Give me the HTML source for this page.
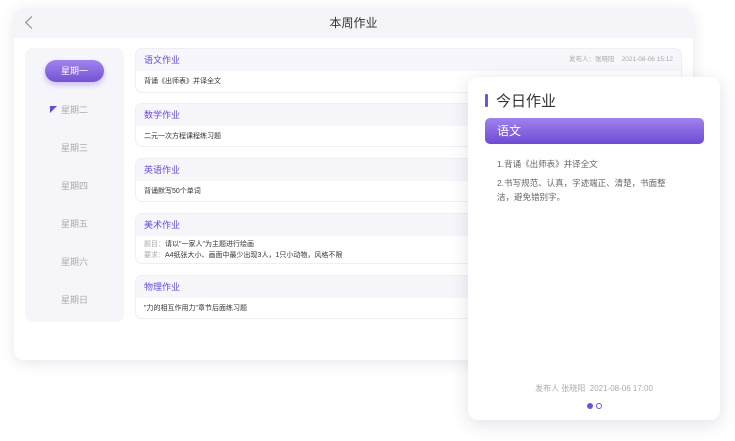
<!DOCTYPE html>
<html><head><meta charset="utf-8"><style>
*{margin:0;padding:0;box-sizing:border-box}
body{width:735px;height:441px;background:#fff;position:relative;overflow:hidden;font-family:"Liberation Sans","Noto Sans CJK SC",sans-serif}
.main{position:absolute;left:14px;top:8px;width:679px;height:352px;background:#fff;border-radius:10px;box-shadow:0 3px 14px rgba(60,60,110,.12);overflow:hidden}
.hd{height:30px;background:#f5f5f9;text-align:center;font-size:12px;line-height:30px;color:#333}
.back{position:absolute;left:13px;top:10px;width:9px;height:9px;border-left:1.3px solid #888;border-bottom:1.3px solid #888;transform:rotate(45deg)}
.side{position:absolute;left:11px;top:40px;width:99px;height:274px;background:#f6f6fa;border-radius:8px}
.day{position:absolute;left:0;width:99px;text-align:center;font-size:9px;color:#aaa}
.on{left:20px;width:59px;height:22px;line-height:22px;border-radius:11px;background:linear-gradient(#a083ee,#7452d6);color:#fff;box-shadow:0 3px 6px rgba(120,90,220,.35)}
.card{position:absolute;left:121px;width:547px;border:1px solid #eeeef4;border-radius:7px;overflow:hidden;background:#fff}
.ch{height:22px;background:#f6f6fb;padding-left:8px;font-size:9px;line-height:22px;color:#6a4ad6}
.cb{padding-left:8px;font-size:7px;color:#333;line-height:11px;padding-top:5px}
.meta{position:absolute;right:8px;top:0;color:#aaa;font-size:6.5px}
.pop{position:absolute;left:468px;top:77px;width:252px;height:343px;background:#fff;border-radius:10px;box-shadow:0 4px 18px rgba(60,60,110,.15)}
</style></head><body>
<div class="main">
<div class="hd">本周作业</div><div class="back"></div>
<div class="side">
<div class="day on" style="top:12px">星期一</div>
<div class="day" style="top:55px">星期二</div>
<div style="position:absolute;left:25px;top:58px;width:0;height:0;border-top:7px solid #6a4ad6;border-right:7px solid transparent"></div>
<div class="day" style="top:93px">星期三</div>
<div class="day" style="top:131px">星期四</div>
<div class="day" style="top:169px">星期五</div>
<div class="day" style="top:207px">星期六</div>
<div class="day" style="top:245px">星期日</div>
</div>
<div class="card" style="top:40px;height:45px"><div class="ch">语文作业<span class="meta">发布人：张晓阳&nbsp;&nbsp;&nbsp;&nbsp;2021-08-06 15:12</span></div><div class="cb">背诵《出师表》并译全文</div></div>
<div class="card" style="top:95px;height:44px"><div class="ch">数学作业</div><div class="cb">二元一次方程课程练习题</div></div>
<div class="card" style="top:150px;height:44px"><div class="ch">英语作业</div><div class="cb">背诵默写50个单词</div></div>
<div class="card" style="top:205px;height:51px"><div class="ch">美术作业</div><div class="cb" style="padding-top:3px"><span style="color:#aaa">题目：</span>请以"一家人"为主题进行绘画<br><span style="color:#aaa">要求：</span>A4纸张大小、画面中最少出现3人，1只小动物，风格不限</div></div>
<div class="card" style="top:267px;height:44px"><div class="ch">物理作业</div><div class="cb">"力的相互作用力"章节后面练习题</div></div>
</div>
<div class="pop">
<div style="position:absolute;left:17px;top:17px;width:3px;height:13px;background:#7452d6;border-radius:1px"></div>
<div style="position:absolute;left:28px;top:13px;font-size:15px;color:#333">今日作业</div>
<div style="position:absolute;left:17px;top:41px;width:219px;height:26px;border-radius:5px;background:linear-gradient(#a083ee,#6d4bd3);color:#fff;font-size:12px;line-height:26px;padding-left:12px">语文</div>
<div style="position:absolute;left:29px;top:80px;width:170px;font-size:8.5px;color:#666;line-height:14px">1.背诵《出师表》并译全文<div style="margin-top:5px">2.书写规范、认真，字迹端正、清楚，书面整洁，避免错别字。</div></div>
<div style="position:absolute;left:0;width:252px;top:306px;text-align:center;font-size:8px;color:#aaa">发布人 张晓阳&nbsp;&nbsp;2021-08-06 17:00</div>
<div style="position:absolute;left:119px;top:326px;width:6px;height:6px;border-radius:50%;background:#7452d6"></div>
<div style="position:absolute;left:128px;top:326px;width:6px;height:6px;border-radius:50%;border:1px solid #7452d6"></div>
</div>
</body></html>
